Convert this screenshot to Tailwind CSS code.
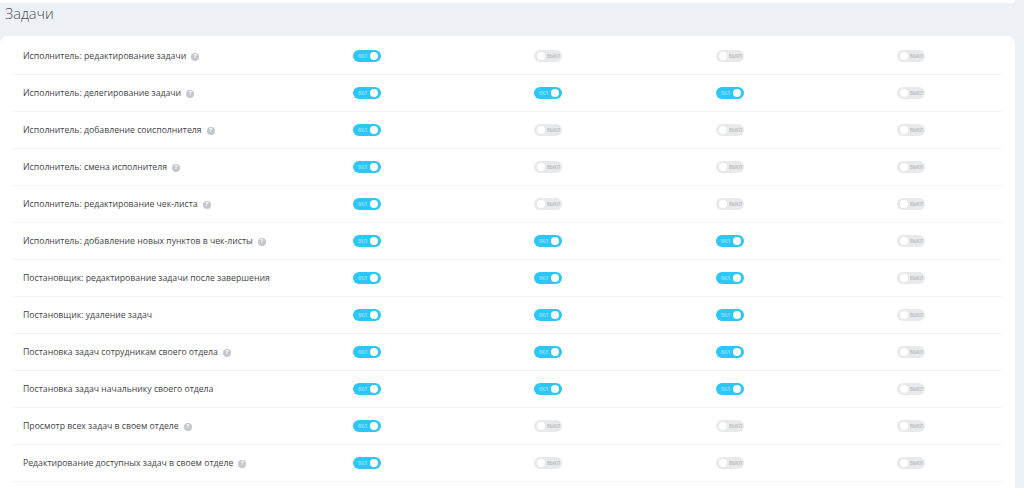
<!DOCTYPE html>
<html lang="en">
<head>
    <meta charset="UTF-8">
    <title>Задачи</title>
    <script src="https://cdn.jsdelivr.net/npm/@tailwindcss/browser@4"></script>
</head>
<body class="h-[488px] overflow-hidden bg-[#edf1f5] font-['Open_Sans',sans-serif]">
    <div class="h-[3px] w-[1015px] rounded-b-lg bg-white"></div>
    <h2 class="h-[33px] pl-[5px] text-[14.6px] leading-[20px] font-light text-[#4a4f55]">Задачи</h2>
    <div id="rows" class="w-[1015px] rounded-lg bg-white pt-[2px] pb-[20px] pl-[12px] pr-[13px]"></div>

    <script>
        const rows = [
            ['Исполнитель: редактирование задачи', true, 1, 0, 0, 0],
            ['Исполнитель: делегирование задачи', true, 1, 1, 1, 0],
            ['Исполнитель: добавление соисполнителя', true, 1, 0, 0, 0],
            ['Исполнитель: смена исполнителя', true, 1, 0, 0, 0],
            ['Исполнитель: редактирование чек-листа', true, 1, 0, 0, 0],
            ['Исполнитель: добавление новых пунктов в чек-листы', true, 1, 1, 1, 0],
            ['Постановщик: редактирование задачи после завершения', false, 1, 1, 1, 0],
            ['Постановщик: удаление задач', false, 1, 1, 1, 0],
            ['Постановка задач сотрудникам своего отдела', true, 1, 1, 1, 0],
            ['Постановка задач начальнику своего отдела', false, 1, 1, 1, 0],
            ['Просмотр всех задач в своем отделе', true, 1, 0, 0, 0],
            ['Редактирование доступных задач в своем отделе', true, 1, 0, 0, 0]
        ];
        const on = '<div class="flex h-[12px] w-[28px] items-center justify-between rounded-full bg-[#2cc7f7] pl-[5px] pr-[3px] text-[4.5px] leading-none font-semibold text-white/50">ВКЛ<span class="size-[8px] rounded-full bg-white"></span></div>';
        const off = '<div class="flex h-[12px] w-[28px] items-center gap-[2px] rounded-full bg-[#e8e9eb] pl-[3px] text-[4.5px] leading-none font-semibold text-[#b4b6ba]"><span class="size-[8px] rounded-full bg-white"></span>ВЫКЛ</div>';
        const help = '<span class="flex size-[8px] items-center justify-center rounded-full bg-[#c4c7cb] text-[6px] font-bold text-white">?</span>';
        document.getElementById('rows').innerHTML = rows.map(r => `
            <div class="grid h-[37px] grid-cols-[341px_181px_182px_181px_105px] items-center border-b border-[#f2f3f5]">
                <div class="flex items-center gap-[5px] pl-[11px] pt-[2px] text-[8.7px] text-[#3f4347]">${r[0]} ${r[1] ? help : ''}</div>
                ${r.slice(2).map(v => v ? on : off).join('')}
            </div>`).join('');
    </script>
</body>
</html>
